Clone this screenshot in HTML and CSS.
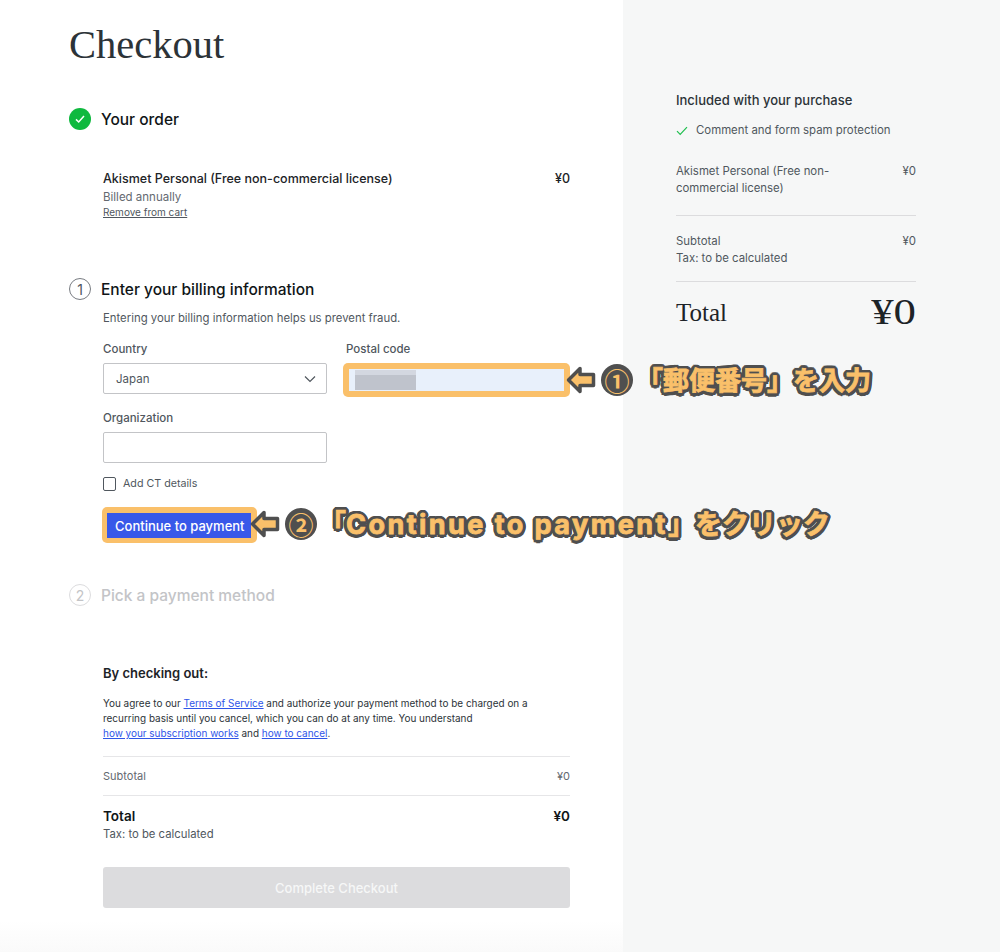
FILE: index.html
```html
<!DOCTYPE html>
<html lang="ja">
<head>
    <meta charset="UTF-8">
    <meta name="viewport" content="width=device-width, initial-scale=1.0">
    <title>Checkout</title>
    <link rel="stylesheet" href="styles.css">
</head>
<body>

<div class="page">
    <main class="main">
        <h1 class="title">Checkout</h1>

        <section class="step step-order">
            <h2 class="step-head">
                <span class="step-check">
                    <svg width="12" height="12" viewBox="0 0 12 12"><path d="M2 6.4 4.7 9 10 3" fill="none" stroke="#fff" stroke-width="1.5"/></svg>
                </span>
                Your order
            </h2>
            <div class="step-body order-line">
                <div class="row">
                    <span class="order-name">Akismet Personal (Free non-commercial license)</span>
                    <span class="order-name">¥0</span>
                </div>
                <div class="order-billed">Billed annually</div>
                <a class="order-remove" href="#">Remove from cart</a>
            </div>
        </section>

        <section class="step step-billing">
            <h2 class="step-head">
                <span class="step-num">1</span>
                Enter your billing information
            </h2>
            <div class="step-body">
                <p class="billing-note">Entering your billing information helps us prevent fraud.</p>
                <div class="field-grid">
                    <div class="field">
                        <label class="field-label">Country</label>
                        <div class="input select">
                            Japan
                            <svg width="12" height="8" viewBox="0 0 12 8"><path d="M1 1.5 6 6.5 11 1.5" fill="none" stroke="#50575e" stroke-width="1.2"/></svg>
                        </div>
                    </div>
                    <div class="field">
                        <label class="field-label">Postal code</label>
                        <div class="postal-box"><span class="postal-blur"></span></div>
                    </div>
                    <div class="field">
                        <label class="field-label">Organization</label>
                        <div class="input"></div>
                    </div>
                </div>
                <div class="ct-line">
                    <span class="ct-box"></span>
                    Add CT details
                </div>
                <div class="continue-box"><button class="continue-btn" type="button">Continue to payment</button></div>
            </div>
        </section>

        <section class="step step-payment">
            <h2 class="step-head step-off">
                <span class="step-num">2</span>
                Pick a payment method
            </h2>
        </section>

        <section class="step-body terms">
            <h3 class="terms-title">By checking out:</h3>
            <p class="terms-text">You agree to our <a href="#">Terms of Service</a> and authorize your payment method to be charged on a<br>recurring basis until you cancel, which you can do at any time. You understand<br><a href="#">how your subscription works</a> and <a href="#">how to cancel</a>.</p>
            <div class="row sum-sub">
                <span>Subtotal</span>
                <span>¥0</span>
            </div>
            <div class="sum-total">
                <div class="row sum-total-line">
                    <span>Total</span>
                    <span>¥0</span>
                </div>
                <div class="sum-tax">Tax: to be calculated</div>
            </div>
            <button class="complete-btn" type="button">Complete Checkout</button>
        </section>
    </main>

    <aside class="side">
        <h3 class="side-title">Included with your purchase</h3>
        <div class="side-feature">
            <svg width="12" height="10" viewBox="0 0 12 10"><path d="M1 5.2 4.2 8.4 11 1.2" fill="none" stroke="#1fbf4f" stroke-width="1.2"/></svg>
            Comment and form spam protection
        </div>
        <div class="row side-item">
            <span class="side-item-name">Akismet Personal (Free non-commercial license)</span>
            <span>¥0</span>
        </div>
        <div class="side-sub">
            <div class="row"><span>Subtotal</span><span>¥0</span></div>
            <div>Tax: to be calculated</div>
        </div>
        <div class="row side-total">
            <span class="side-total-label">Total</span>
            <span class="side-total-value">¥0</span>
        </div>
    </aside>

    <!-- annotations drawn over the screenshot -->
    <div class="note note-postal">
        <svg class="note-arrow" width="30" height="30" viewBox="0 0 30 30"><path d="M2.5 15 14 3.5V9.5H27.5V20.5H14V26.5Z" fill="#fac06a" stroke="#4f4f4f" stroke-width="3.5" stroke-linejoin="round"/></svg>
        <span class="note-num">①</span>
        <span class="note-text">「郵便番号」を入力</span>
    </div>
    <div class="note note-continue">
        <svg class="note-arrow" width="30" height="30" viewBox="0 0 30 30"><path d="M2.5 15 14 3.5V9.5H27.5V20.5H14V26.5Z" fill="#fac06a" stroke="#4f4f4f" stroke-width="3.5" stroke-linejoin="round"/></svg>
        <span class="note-num">②</span>
        <span class="note-text">「<span class="note-latin">Continue to payment</span>」をクリック</span>
    </div>
</div>

</body>
</html>
```

FILE: styles.css
```css
* {
    box-sizing: border-box;
}

body {
    margin: 0;
    background-color: #fff;
    font-family: 'Inter', 'Liberation Sans', sans-serif;
    color: #2c3338;
}

a {
    color: #2f55e8;
}

.page {
    position: relative;
    display: flex;
    width: 1000px;
    height: 952px;
    overflow: hidden;
}

.row {
    display: flex;
    justify-content: space-between;
}

/* left column */
.main {
    width: 623px;
    padding: 22px 53px 0 69px;
    background: linear-gradient(#fff 920px, #fafafa);
}

.title {
    margin: 0;
    font-family: 'Liberation Serif', serif;
    font-size: 40.5px;
    line-height: 46px;
    font-weight: 400;
    color: #2c3338;
}

.step-order {
    margin-top: 40px;
}

.step-billing {
    margin-top: 59px;
}

.step-payment {
    margin-top: 41px;
}

.step-head {
    display: flex;
    align-items: center;
    gap: 10px;
    margin: 0;
    height: 22px;
    font-size: 15.5px;
    font-weight: 500;
    color: #101517;
}

.step-check,
.step-num {
    display: flex;
    align-items: center;
    justify-content: center;
    width: 22px;
    height: 22px;
    border-radius: 50%;
}

.step-check {
    background-color: #0fb93f;
}

.step-num {
    border: 1px solid #787c82;
    font-size: 14px;
    font-weight: 400;
    color: #50575e;
}

.step-off {
    color: #c3c4c7;
}

.step-off .step-num {
    border-color: #dcdcde;
    color: #c3c4c7;
}

.step-body {
    margin-left: 34px;
}

.order-line {
    margin-top: 40px;
}

.order-name {
    font-size: 12.5px;
    line-height: 18px;
    font-weight: 500;
    color: #1d2327;
}

.order-billed {
    margin-top: 1px;
    font-size: 11.5px;
    line-height: 16px;
    color: #646970;
}

.order-remove {
    display: block;
    margin-top: 1px;
    font-size: 10px;
    line-height: 13px;
    color: #50575e;
}

.billing-note {
    margin: 10px 0 0;
    font-size: 11.35px;
    line-height: 17px;
    color: #50575e;
}

.field-grid {
    display: grid;
    grid-template-columns: 224px 224px;
    column-gap: 19px;
    row-gap: 16px;
    margin-top: 14px;
}

.field-label {
    display: block;
    margin-bottom: 6px;
    font-size: 11.5px;
    line-height: 16px;
    font-weight: 500;
    color: #50575e;
}

.input {
    height: 31px;
    border: 1px solid #c3c4c7;
    border-radius: 2px;
    background-color: #fff;
}

.select {
    display: flex;
    align-items: center;
    justify-content: space-between;
    padding: 0 10px 0 12px;
    font-size: 11.5px;
    color: #50575e;
}

.postal-box {
    height: 34px;
    margin: 0 0 -3px -3px;
    padding: 6px;
    border-radius: 5px;
    background-color: #fac06a;
}

.postal-blur {
    position: relative;
    display: block;
    height: 100%;
    background-color: #e8f0fb;
}

.postal-blur::after {
    content: "";
    position: absolute;
    left: 6px;
    top: 1px;
    width: 61px;
    height: 20px;
    background: linear-gradient(#d3d7e0 5px, #bfc3cc 5px);
}

.ct-line {
    display: flex;
    align-items: center;
    gap: 7px;
    margin-top: 14px;
    font-size: 10.7px;
    line-height: 14px;
    color: #50575e;
}

.ct-box {
    width: 13px;
    height: 14px;
    border: 1px solid #50575e;
    border-radius: 2px;
}

.continue-box {
    width: 155px;
    height: 36px;
    margin-top: 16px;
    margin-left: -1px;
    padding: 6px 5px;
    border-radius: 5px;
    background-color: #fac06a;
}

.continue-btn {
    display: block;
    width: 144px;
    height: 25px;
    padding: 0 0 0 8px;
    border: none;
    background-color: #3858e9;
    color: #fff;
    font-family: inherit;
    font-size: 13px;
    font-weight: 500;
    text-align: left;
    white-space: nowrap;
}

.terms {
    margin-top: 58px;
}

.terms-title {
    margin: 0;
    font-size: 13px;
    line-height: 18px;
    font-weight: 600;
    color: #1d2327;
}

.terms-text {
    margin: 14px 0 0;
    font-size: 9.95px;
    line-height: 15px;
    color: #2c3338;
}

.sum-sub {
    margin-top: 15px;
    padding: 12px 0;
    border-top: 1px solid #e6e6e8;
    border-bottom: 1px solid #e6e6e8;
    font-size: 11px;
    line-height: 14px;
    color: #646970;
}

.sum-total {
    padding-top: 10px;
}

.sum-total-line {
    font-size: 13.5px;
    line-height: 20px;
    font-weight: 600;
    color: #101517;
}

.sum-tax {
    font-size: 11.3px;
    line-height: 16px;
    color: #50575e;
}

.complete-btn {
    display: block;
    width: 100%;
    height: 41px;
    margin-top: 25px;
    border: none;
    border-radius: 3px;
    background-color: #dcdcde;
    color: #f6f7f7;
    font-family: inherit;
    font-size: 13px;
    font-weight: 500;
}

/* right column */
.side {
    width: 377px;
    padding: 92px 84px 0 53px;
    background-color: #f6f7f7;
    font-size: 11.4px;
    line-height: 17.5px;
    color: #50575e;
}

.side-title {
    margin: 0;
    font-size: 13px;
    line-height: 17px;
    font-weight: 500;
    color: #2c3338;
}

.side-feature {
    display: flex;
    align-items: center;
    gap: 8px;
    margin-top: 13px;
}

.side-feature svg {
    flex: none;
}

.side-item {
    align-items: flex-start;
    margin-top: 23px;
    padding-bottom: 17px;
    border-bottom: 1px solid #dcdcde;
}

.side-item-name {
    width: 165px;
}

.side-sub {
    padding: 17px 0 13px;
    border-bottom: 1px solid #dcdcde;
}

.side-total {
    align-items: center;
    margin-top: 12px;
    font-family: 'Liberation Serif', serif;
    color: #1d2327;
}

.side-total-label {
    font-size: 25px;
    line-height: 34px;
}

.side-total-value {
    font-size: 35px;
    line-height: 38px;
    transform: scaleX(1.28);
    transform-origin: right center;
}

/* annotations */
.note {
    position: absolute;
    display: flex;
    align-items: center;
    height: 38px;
    font-family: 'Inter', 'Noto Sans CJK JP', sans-serif;
    font-weight: 700;
    color: #fac06a;
    white-space: nowrap;
}

.note-postal {
    left: 566px;
    top: 361px;
}

.note-continue {
    left: 250px;
    top: 505px;
}

.note-num {
    display: flex;
    align-items: center;
    justify-content: center;
    width: 32px;
    height: 32px;
    margin-left: 5px;
    border-radius: 50%;
    background-color: #4f4f4f;
    font-family: 'Noto Sans CJK JP', sans-serif;
    font-size: 25px;
    line-height: 32px;
}

.note-text {
    margin-left: 4px;
    padding-top: 2px;
    font-size: 26px;
    line-height: 38px;
    -webkit-text-stroke: 0.8px #fac06a;
    text-shadow: 3.5px 0 #4f4f4f, -3.5px 0 #4f4f4f, 0 3.5px #4f4f4f, 0 -3.5px #4f4f4f,
        2.5px 2.5px #4f4f4f, -2.5px 2.5px #4f4f4f, 2.5px -2.5px #4f4f4f, -2.5px -2.5px #4f4f4f,
        3.2px 1.4px #4f4f4f, -3.2px 1.4px #4f4f4f, 3.2px -1.4px #4f4f4f, -3.2px -1.4px #4f4f4f,
        1.4px 3.2px #4f4f4f, -1.4px 3.2px #4f4f4f, 1.4px -3.2px #4f4f4f, -1.4px -3.2px #4f4f4f;
}

.note-continue .note-text {
    font-size: 27px;
    margin-left: 2px;
}

.note-latin {
    letter-spacing: 2.45px;
}
```
